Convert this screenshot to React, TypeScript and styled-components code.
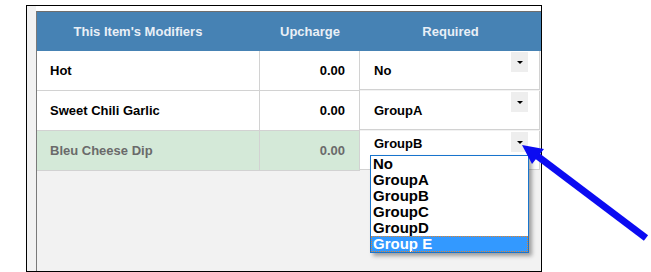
import React from 'react';
import styled, { createGlobalStyle } from 'styled-components';

const GlobalStyle = createGlobalStyle`
  html, body {
    margin: 0;
    padding: 0;
    background: #fff;
  }
  body {
    font-family: 'Liberation Sans', Arial, sans-serif;
  }
`;

const modifiers = [
  { name: 'Hot', upcharge: '0.00', required: 'No' },
  { name: 'Sweet Chili Garlic', upcharge: '0.00', required: 'GroupA' },
  { name: 'Bleu Cheese Dip', upcharge: '0.00', required: 'GroupB', active: true },
];

const options = ['No', 'GroupA', 'GroupB', 'GroupC', 'GroupD', 'Group E'];

const Page = styled.div`
  position: relative;
  width: 651px;
  height: 272px;
  padding: 5px 0 0 26px;
  box-sizing: border-box;
`;

const Frame = styled.div`
  width: 516px;
  height: 267px;
  box-sizing: border-box;
  border: 1px solid #000;
  background: #fff;
  display: flex;
`;

const Gutter = styled.div`
  width: 9px;
  background: #f2f2f2;
`;

const Panel = styled.div`
  flex: 1;
  margin-top: 5px;
  border-top: 1px solid #6e6e6e;
  border-left: 1px solid #7a7a7a;
  background: #f2f2f2;
`;

const Grid = styled.div`
  display: grid;
  grid-template-columns: 223px 100px 180px;
  font-size: 13px;
  font-weight: bold;
`;

const Head = styled.div`
  display: grid;
  grid-template-columns: 223px 100px 181px;
  height: 39px;
  background: #4682b4;
  color: #e9eff6;
  font-size: 13px;
  font-weight: bold;
`;

const HeadCell = styled.div<{ $shift?: number }>`
  display: flex;
  align-items: center;
  justify-content: center;
  padding-right: ${({ $shift }) => $shift ?? 0}px;
`;

const Cell = styled.div<{ $active?: boolean; $align?: 'left' | 'right' }>`
  height: 39px;
  display: flex;
  align-items: center;
  justify-content: ${({ $align }) => ($align === 'right' ? 'flex-end' : 'flex-start')};
  padding: ${({ $align }) => ($align === 'right' ? '0 14px 0 0' : '0 0 0 13px')};
  background: ${({ $active }) => ($active ? '#d4e9d8' : '#fff')};
  color: ${({ $active }) => ($active ? '#6a6a6a' : '#000')};
  border-right: 1px solid #d2d2d2;
  border-bottom: 1px solid #d2d2d2;
`;

const SelectCell = styled.div<{ $open?: boolean }>`
  position: relative;
  height: 39px;
  display: flex;
  align-items: ${({ $open }) => ($open ? 'flex-start' : 'center')};
  padding: ${({ $open }) => ($open ? '5px 0 0 14px' : '0 0 0 14px')};
  box-sizing: border-box;
  background: #fff;
  color: #000;
  border-right: 1px solid #d2d2d2;
  border-bottom: 1px solid #d2d2d2;
`;

const DropButton = styled.div`
  position: absolute;
  top: 1px;
  left: 151px;
  width: 17px;
  height: 20px;
  background: #eeeeee;
  display: flex;
  align-items: center;
  justify-content: center;

  &:after {
    content: '';
    border-left: 3px solid transparent;
    border-right: 3px solid transparent;
    border-top: 3px solid #000;
  }
`;

const List = styled.ul`
  position: absolute;
  top: 24px;
  left: 10px;
  width: 159px;
  margin: 0;
  padding: 0;
  list-style: none;
  background: #fff;
  border: 1px solid #1874cd;
  box-sizing: border-box;
  box-shadow: 3px 3px 4px rgba(0, 0, 0, 0.35);
  font-size: 15px;
  line-height: 16px;
  z-index: 5;
`;

const Option = styled.li<{ $selected?: boolean }>`
  height: 16px;
  padding-left: 2px;
  white-space: nowrap;
  color: ${({ $selected }) => ($selected ? '#fff' : '#000')};
  background: ${({ $selected }) => ($selected ? '#3399ff' : 'transparent')};
  outline: ${({ $selected }) => ($selected ? '1px dotted #e0822a' : 'none')};
  outline-offset: -1px;
`;

const Pointer = styled.svg`
  position: absolute;
  left: 0;
  top: 0;
  pointer-events: none;
  z-index: 10;
`;

const App = () => {
  return (
    <Page>
      <GlobalStyle />
      <Frame>
        <Gutter />
        <Panel>
          <Head>
            <HeadCell $shift={21}>This Item's Modifiers</HeadCell>
            <HeadCell>Upcharge</HeadCell>
            <HeadCell>Required</HeadCell>
          </Head>
          <Grid>
            {modifiers.map((m) => (
              <React.Fragment key={m.name}>
                <Cell $active={m.active}>{m.name}</Cell>
                <Cell $active={m.active} $align="right">{m.upcharge}</Cell>
                <SelectCell $open={m.active}>
                  {m.required}
                  <DropButton />
                  {m.active && (
                    <List>
                      {options.map((o) => (
                        <Option key={o} $selected={o === 'Group E'}>{o}</Option>
                      ))}
                    </List>
                  )}
                </SelectCell>
              </React.Fragment>
            ))}
          </Grid>
        </Panel>
      </Frame>
      <Pointer width="651" height="272" viewBox="0 0 651 272">
        <line x1="646" y1="238" x2="536" y2="155" stroke="#0b0bf2" strokeWidth="7" />
        <polygon points="522,145 544,149 532,164" fill="#0b0bf2" />
      </Pointer>
    </Page>
  );
};

export default App;
